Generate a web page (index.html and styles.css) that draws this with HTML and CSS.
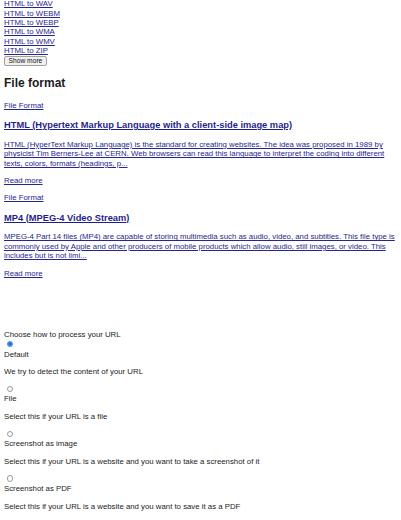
FILE: index.html
```html
<!DOCTYPE html>
<html lang="en">
<head>
<meta charset="utf-8">
<title>HTML converter</title>
<link rel="stylesheet" href="styles.css">
</head>
<body>
<div class="links">
  <a href="#">HTML to WAV</a>
  <a href="#">HTML to WEBM</a>
  <a href="#">HTML to WEBP</a>
  <a href="#">HTML to WMA</a>
  <a href="#">HTML to WMV</a>
  <a href="#">HTML to ZIP</a>
</div>
<button class="more" type="button">Show more</button>

<h2 class="section-title">File format</h2>
<p><a href="#">File Format</a></p>
<h3 class="format-title"><a href="#">HTML (Hypertext Markup Language with a client-side image map)</a></h3>
<p class="desc"><a href="#">HTML (HyperText Markup Language) is the standard for creating websites. The idea was proposed in 1989 by physicist Tim Berners-Lee at CERN. Web browsers can read this language to interpret the coding into different texts, colors, formats (headings, p...</a></p>
<p><a href="#">Read more</a></p>
<p><a href="#">File Format</a></p>
<h3 class="format-title"><a href="#">MP4 (MPEG-4 Video Stream)</a></h3>
<p class="desc"><a href="#">MPEG-4 Part 14 files (MP4) are capable of storing multimedia such as audio, video, and subtitles. This file type is commonly used by Apple and other producers of mobile products which allow audio, still images, or video. This includes but is not limi...</a></p>
<p><a href="#">Read more</a></p>

<div class="process">
  <div class="process-title">Choose how to process your URL</div>
  <div class="option">
    <div class="radio-line"><input class="radio" type="radio" name="mode" id="m1" checked></div>
    <label for="m1">Default</label>
    <p>We try to detect the content of your URL</p>
  </div>
  <div class="option">
    <div class="radio-line"><input class="radio" type="radio" name="mode" id="m2"></div>
    <label for="m2">File</label>
    <p>Select this if your URL is a file</p>
  </div>
  <div class="option">
    <div class="radio-line"><input class="radio" type="radio" name="mode" id="m3"></div>
    <label for="m3">Screenshot as image</label>
    <p>Select this if your URL is a website and you want to take a screenshot of it</p>
  </div>
  <div class="option">
    <div class="radio-line"><input class="radio" type="radio" name="mode" id="m4"></div>
    <label for="m4">Screenshot as PDF</label>
    <p>Select this if your URL is a website and you want to save it as a PDF</p>
  </div>
</div>
</body>
</html>
```

FILE: styles.css
```css
html, body {
  background: #ffffff;
}
body {
  margin: 0 4px;
  font-family: "Liberation Sans", Arial, sans-serif;
  font-size: 7.8px;
  line-height: 9.3px;
  color: #1c1c1c;
  overflow: hidden;
}
a {
  color: #26268e;
  text-decoration: underline;
}
.links {
  margin-top: -0.6px;
}
.links a {
  display: block;
}
.more {
  display: block;
  margin: 0.8px 0 0;
  padding: 0 3.5px;
  font-family: "Liberation Sans", Arial, sans-serif;
  font-size: 6.7px;
  line-height: 8px;
  height: 10px;
  color: #111;
  background: #f0f0f0;
  border: 1px solid #a0a0a0;
  border-radius: 2px;
}
.section-title {
  font-size: 12px;
  font-weight: bold;
  margin: 11px 0 10px;
  line-height: 13.8px;
}
.format-title {
  font-size: 9.3px;
  font-weight: bold;
  margin: 10px 0 9px;
  line-height: 10.8px;
}
.format-title a {
  color: #1f1f8c;
}
p {
  margin: 8px 0;
}
.desc {
  line-height: 9.4px;
}
.process {
  margin-top: 52px;
}
.option label {
  display: block;
}
.radio {
  -webkit-appearance: none;
  appearance: none;
  display: inline-block;
  box-sizing: border-box;
  width: 6.5px;
  height: 6.5px;
  margin: 1.5px 1.5px 0 2.5px;
  padding: 0;
  border: 0.6px solid #9a9a9a;
  border-radius: 50%;
  background: #ffffff;
  vertical-align: baseline;
}
.radio:checked {
  border-color: #3d86e0;
  background: radial-gradient(circle, #1f5fb8 0 1.2px, #4a93ec 1.6px);
}
```
